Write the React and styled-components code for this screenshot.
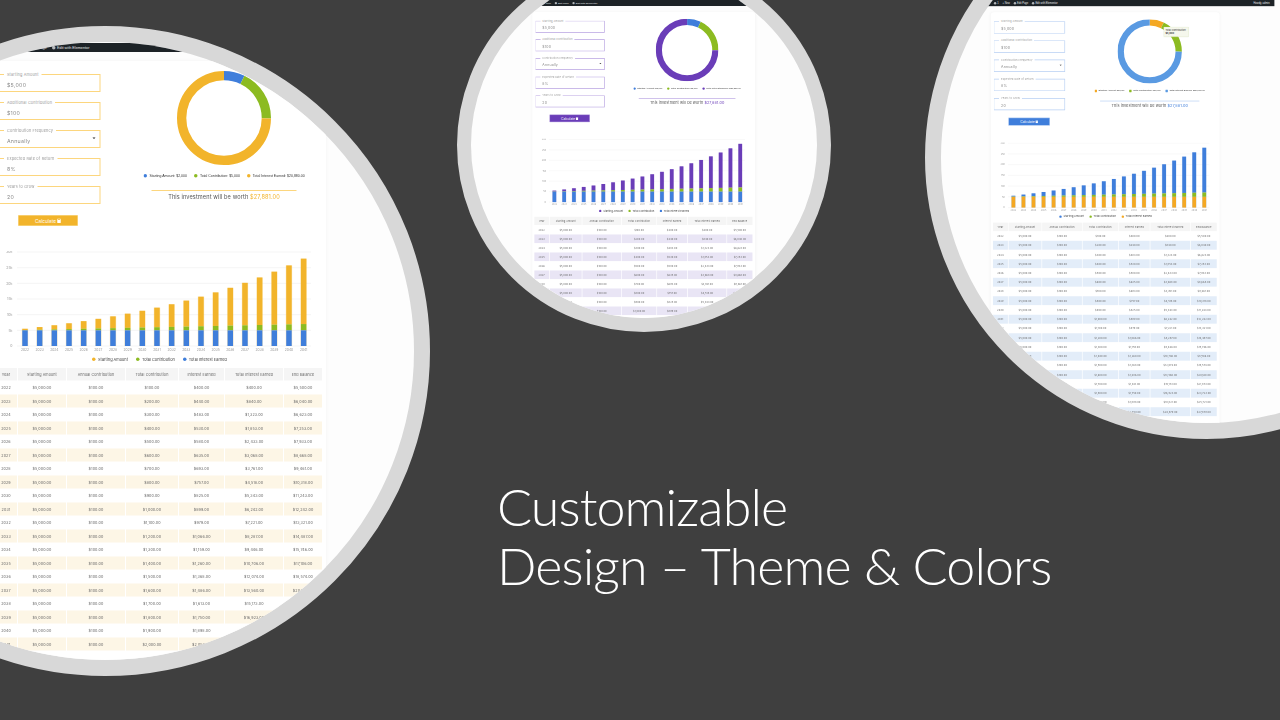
import React from "react";
import styled, { createGlobalStyle } from "styled-components";

const GlobalStyle = createGlobalStyle`
  html, body {
    margin: 0;
    padding: 0;
    background: #3f3f3f;
  }
  body {
    width: 1280px;
    height: 720px;
    overflow: hidden;
    font-family: "Inter", "Liberation Sans", sans-serif;
  }
`;

const Canvas = styled.div`
  position: relative;
  width: 1280px;
  height: 720px;
  overflow: hidden;
  background: #3f3f3f;
`;

const Headline = styled.h1`
  position: absolute;
  left: 497px;
  top: 477px;
  margin: 0;
  font-family: "Lato", "Liberation Sans", sans-serif;
  font-weight: 300;
  font-size: 52px;
  line-height: 59px;
  letter-spacing: -0.9px;
  color: #fff;
  white-space: nowrap;
`;

const Lens = styled.div`
  position: absolute;
  left: ${p => p.$x}px;
  top: ${p => p.$y}px;
  width: ${p => p.$size}px;
  height: ${p => p.$size}px;
  box-sizing: border-box;
  border: ${p => p.$ring}px solid #d8d8d8;
  border-radius: 50%;
  background: #fdfdfd;
  overflow: hidden;
`;

// the screenshot inside a lens, drawn at double size and scaled down
const Page = styled.div`
  position: absolute;
  left: ${p => p.$x}px;
  top: ${p => p.$y}px;
  width: 988px;
  transform: scale(${p => p.$scale});
  transform-origin: 0 0;
  filter: blur(${p => p.$blur}px);
  padding-bottom: 40px;
`;

const AdminBar = styled.div`
  display: flex;
  align-items: center;
  justify-content: space-between;
  height: 18px;
  padding: 0 14px 0 151px;
  background: #1d2327;
  color: #e6e8e9;
  font-family: "Liberation Sans", sans-serif;
  font-size: 7.5px;
`;

const BarGroup = styled.div`
  display: flex;
  align-items: center;
  gap: 11px;
`;

const BarItem = styled.span`
  display: flex;
  align-items: center;
  gap: 3px;
`;

const BarDot = styled.i`
  width: 7px;
  height: 7px;
  border-radius: 50%;
  background: #b4b7ba;
`;

const Card = styled.div`
  position: relative;
  box-sizing: border-box;
  width: 668px;
  margin: 18px 0 0 160px;
  padding: 26px 8px 30px 6px;
  background: #fff;
  border-radius: 10px;
  box-shadow: 0 0 8px rgba(0, 0, 0, 0.04);
`;

const Top = styled.div`
  display: flex;
  height: 354px;
`;

const Form = styled.div`
  display: flex;
  flex-direction: column;
  gap: 20px;
  width: 208px;
  margin-left: 3px;
`;

const Field = styled.div`
  position: relative;
  box-sizing: border-box;
  height: 36px;
  padding: 13px 0 0 20px;
  border: 2px solid ${p => p.$line};
  border-left-width: 1px;
  color: #8c8c8c;
  font-size: 10.5px;
  letter-spacing: 0.5px;
`;

const FieldLabel = styled.label`
  position: absolute;
  left: 14px;
  top: -6px;
  padding: 0 6px;
  background: #fff;
  color: #9a9a9a;
  font-size: 7.6px;
  letter-spacing: 0.35px;
  line-height: 10px;
`;

const Caret = styled.i`
  position: absolute;
  right: 8px;
  top: 13px;
  border: 3px solid transparent;
  border-top-color: #222;
`;

const CalcButton = styled.button`
  display: flex;
  align-items: center;
  justify-content: center;
  gap: 2px;
  width: 120px;
  height: 22px;
  margin: 2px 0 0 43px;
  padding: 0;
  border: 1px solid ${p => p.$line};
  background: ${p => p.$color};
  color: #fff;
  font: inherit;
  font-size: 9.5px;
`;

const Summary = styled.div`
  display: flex;
  flex-direction: column;
  align-items: center;
  width: 290px;
  margin: -6px 0 0 102px;
`;

const DonutBox = styled.div`
  position: relative;
  width: 188px;
  height: 188px;
`;

const Tooltip = styled.div`
  position: absolute;
  left: 134px;
  top: 22px;
  width: 62px;
  padding: 4px 5px;
  background: #f5f7ec;
  border: 1px solid #cfdcae;
  border-radius: 2px;
  color: #333;
  font-size: 7px;
  line-height: 10px;
  white-space: nowrap;
`;

const DonutLegend = styled.div`
  display: flex;
  justify-content: center;
  gap: 14px;
  margin-top: 16px;
  white-space: nowrap;
  color: #333;
  font-family: "Liberation Sans", sans-serif;
  font-size: 7px;
  line-height: 10px;
`;

const LegendItem = styled.span`
  display: flex;
  align-items: center;
  gap: 5px;
`;

const Swatch = styled.i`
  width: 7px;
  height: 7px;
  border-radius: ${p => (p.$square ? 1 : 4)}px;
  background: ${p => p.$color};
`;

const Worth = styled.div`
  width: 100%;
  margin-top: 24px;
  padding-top: 3px;
  border-top: 2px solid ${p => p.$line};
  text-align: center;
  color: #555;
  font-size: 11.2px;
  line-height: 16px;
  letter-spacing: 0.22px;
  white-space: nowrap;

  b {
    font-weight: 400;
    color: ${p => p.$color};
  }
`;

const ChartBox = styled.div`
  width: 654px;
  height: 234px;
`;

const ChartSvg = styled.svg`
  display: block;
`;

const ChartLegend = styled.div`
  display: flex;
  justify-content: center;
  gap: 16px;
  margin-top: -24px;
  padding-left: 4px;
  color: #444;
  font-size: 7.8px;
  line-height: 12px;
`;

const Table = styled.div`
  display: flex;
  flex-direction: column;
  width: 654px;
`;

const Row = styled.div`
  display: grid;
  grid-template-columns: 44px 96px 116px 104px 90px 116px 76px;
  column-gap: 2px;
  height: ${p => (p.$head ? 26 : 27)}px;
`;

const Cell = styled.div`
  display: flex;
  align-items: center;
  justify-content: center;
  margin-bottom: 1px;
  background: ${p => p.$bg};
  color: #666;
  font-size: 7.4px;
  letter-spacing: 0.2px;
`;

const THEMES = {
  yellow: {
    line: "#fcd67e",
    accent: "#f2b42b",
    buttonLine: "#fbe6ae",
    first: "#3f7edb",
    last: "#f2b42b",
    stripe: "#fdf6e6",
  },
  purple: {
    line: "#b9a4e2",
    accent: "#6a3db8",
    buttonLine: "#c9b8e8",
    first: "#3f7edb",
    last: "#6a3db8",
    stripe: "#e9e5f5",
  },
  blue: {
    line: "#b8d0f3",
    accent: "#3f7edb",
    buttonLine: "#c4d9f5",
    first: "#f4a823",
    last: "#3f7edb",
    stripe: "#e3edf9",
    donutLast: "#5a9ae2",
  },
};

const GREEN = "#8cbb21";
const HEADERS = [
  "Year",
  "Starting Amount",
  "Annual Contribution",
  "Total Contribution",
  "Interest Earned",
  "Total Interest Earned",
  "End Balance",
];
const FIELDS = [
  ["Starting Amount", "$5,000"],
  ["Additional Contribution", "$100"],
  ["Contribution Frequency", "Annually", true],
  ["Expected Rate of Return", "8%"],
  ["Years to Grow", "20"],
];

const money = n => "$" + n.toLocaleString("en-US", { minimumFractionDigits: 2, maximumFractionDigits: 2 });

// same sums the calculator runs: 8% a year on $5,000 plus $100 a year
function buildRows() {
  const rows = [];
  let balance = 5000;
  let earned = 0;
  for (let i = 0; i < 20; i++) {
    const interest = Math.round(balance * 0.08);
    earned += interest;
    balance += interest + 100;
    rows.push({ year: 2022 + i, total: 100 * (i + 1), interest, earned, balance });
  }
  return rows;
}

const ROWS = buildRows();

function Donut({ theme }) {
  const r = 84.7;
  const c = 2 * Math.PI * r;
  const parts = [
    [2000, theme.first],
    [5000, GREEN],
    [20881, theme.donutLast || theme.last],
  ];
  const sum = 27881;
  let start = 0;
  return (
    <svg width="188" height="188" viewBox="0 0 188 188">
      <g transform="rotate(-90 94 94)">
        {parts.map(([value, color]) => {
          const len = (value / sum) * c;
          const el = (
            <circle
              key={color}
              cx="94"
              cy="94"
              r={r}
              fill="none"
              stroke={color}
              strokeWidth="18.6"
              strokeDasharray={`${len} ${c - len}`}
              strokeDashoffset={-start}
            />
          );
          start += len;
          return el;
        })}
      </g>
    </svg>
  );
}

function Chart({ theme }) {
  const left = 44;
  const right = 632;
  const bottom = 190;
  const unit = 188 / 30000;
  const pitch = 29.33;
  const ticks = ["0", "5k", "10k", "15k", "20k", "25k", "30k"];
  return (
    <ChartSvg width="654" height="234" viewBox="0 0 654 234">
      {ticks.map((t, i) => {
        const y = bottom - i * 31.33;
        return (
          <g key={t}>
            <line x1={left} x2={right} y1={y} y2={y} stroke="#f1f1f1" strokeWidth="1.4" />
            <text x={left - 9} y={y + 2.5} textAnchor="end" fontSize="7" fill="#999">
              {t}
            </text>
          </g>
        );
      })}
      {ROWS.map((row, i) => {
        const x = 60 + i * pitch;
        const w = 11;
        const first = 5000 * unit;
        const green = row.total * unit;
        const top = row.balance * unit;
        return (
          <g key={row.year}>
            <rect x={x - w / 2 - 1} y={bottom - top} width={w + 2} height={top} fill={theme.last} opacity="0.25" />
            <rect x={x - w / 2} y={bottom - top} width={w} height={top - first - green} fill={theme.last} />
            <rect x={x - w / 2} y={bottom - first - green} width={w} height={green} fill={GREEN} />
            <rect x={x - w / 2} y={bottom - first} width={w} height={first} fill={theme.first} />
            <text x={x} y={bottom + 10} textAnchor="middle" fontSize="6.6" fill="#999">
              {row.year}
            </text>
          </g>
        );
      })}
    </ChartSvg>
  );
}

function Calculator({ theme, x, y, scale, tooltip }) {
  return (
    <Page $x={x} $y={y} $scale={scale} $blur={1.1}>
      <AdminBar>
        <BarGroup>
          <BarDot />
          <BarItem>
            <BarDot />1
          </BarItem>
          <BarItem>+ New</BarItem>
          <BarItem>
            <BarDot />
            Edit Page
          </BarItem>
          <BarItem>
            <BarDot />
            Edit with Elementor
          </BarItem>
        </BarGroup>
        <BarItem>Howdy, admin</BarItem>
      </AdminBar>
      <Card>
        <Top>
          <Form>
            {FIELDS.map(([label, value, select]) => (
              <Field key={label} $line={theme.line}>
                <FieldLabel>{label}</FieldLabel>
                {value}
                {select && <Caret />}
              </Field>
            ))}
            <CalcButton $color={theme.accent} $line={theme.buttonLine}>
              Calculate
              <svg width="8" height="9" viewBox="0 0 8 9">
                <rect x="0.5" width="7" height="9" rx="1" fill="#fff" />
                <rect x="1.6" y="1.2" width="4.8" height="1.6" fill={theme.accent} />
              </svg>
            </CalcButton>
          </Form>
          <Summary>
            <DonutBox>
              <Donut theme={theme} />
              {tooltip && (
                <Tooltip>
                  Total Contribution
                  <br />
                  <b>$5,000</b>
                </Tooltip>
              )}
            </DonutBox>
            <DonutLegend>
              <LegendItem>
                <Swatch $color={theme.first} $square={tooltip} />
                Starting Amount: $2,000
              </LegendItem>
              <LegendItem>
                <Swatch $color={GREEN} $square={tooltip} />
                Total Contribution: $5,000
              </LegendItem>
              <LegendItem>
                <Swatch $color={theme.donutLast || theme.last} $square={tooltip} />
                Total Interest Earned: $20,880.00
              </LegendItem>
            </DonutLegend>
            <Worth $line={theme.line} $color={theme.accent}>
              This investment will be worth <b>$27,881.00</b>
            </Worth>
          </Summary>
        </Top>
        <ChartBox>
          <Chart theme={theme} />
          <ChartLegend>
            <LegendItem>
              <Swatch $color={theme.last} />
              Starting Amount
            </LegendItem>
            <LegendItem>
              <Swatch $color={GREEN} />
              Total Contribution
            </LegendItem>
            <LegendItem>
              <Swatch $color={theme.first} />
              Total Interest Earned
            </LegendItem>
          </ChartLegend>
        </ChartBox>
        <Table>
          <Row $head>
            {HEADERS.map(h => (
              <Cell key={h} $bg="#f5f5f5">
                {h}
              </Cell>
            ))}
          </Row>
          {ROWS.map((row, i) => {
            const bg = i % 2 ? theme.stripe : "#fff";
            return (
              <Row key={row.year}>
                <Cell $bg={bg}>{row.year}</Cell>
                <Cell $bg={bg}>$5,000.00</Cell>
                <Cell $bg={bg}>$100.00</Cell>
                <Cell $bg={bg}>{money(row.total)}</Cell>
                <Cell $bg={bg}>{money(row.interest)}</Cell>
                <Cell $bg={bg}>{money(row.earned)}</Cell>
                <Cell $bg={bg}>{money(row.balance)}</Cell>
              </Row>
            );
          })}
        </Table>
      </Card>
    </Page>
  );
}

export default function App() {
  return (
    <Canvas>
      <GlobalStyle />
      <Lens $x={-220} $y={26} $size={650} $ring={16}>
        <Calculator theme={THEMES.yellow} x={116} y={1} scale={0.5} />
      </Lens>
      <Lens $x={457} $y={-42} $size={374} $ring={14}>
        <Calculator theme={THEMES.purple} x={8} y={28} scale={0.3335} />
      </Lens>
      <Lens $x={925} $y={-124} $size={563} $ring={16}>
        <Calculator theme={THEMES.blue} x={-5} y={108} scale={0.3425} tooltip />
      </Lens>
      <Headline>
        Customizable
        <br />
        Design – Theme &amp; Colors
      </Headline>
    </Canvas>
  );
}
